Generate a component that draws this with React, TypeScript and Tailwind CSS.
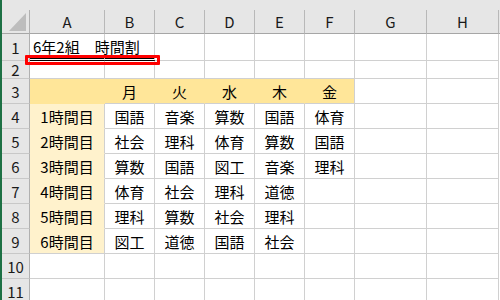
import React from "react";

const COLS = ["A", "B", "C", "D", "E", "F", "G", "H"];

// 時間割 rows 4-9: label + Mon..Fri
const timetable: string[][] = [
  ["1時間目", "国語", "音楽", "算数", "国語", "体育"],
  ["2時間目", "社会", "理科", "体育", "算数", "国語"],
  ["3時間目", "算数", "国語", "図工", "音楽", "理科"],
  ["4時間目", "体育", "社会", "理科", "道徳", ""],
  ["5時間目", "理科", "算数", "社会", "理科", ""],
  ["6時間目", "図工", "道徳", "国語", "社会", ""],
];

const days = ["", "月", "火", "水", "木", "金"];

const ROW_COUNT = 11;

function fillOf(r: number, c: number): string | null {
  if (r === 3 && c >= 0 && c <= 5) return "bg-[#ffe699]";
  if (r >= 4 && r <= 9 && c === 0) return "bg-[#fff2cc]";
  return null;
}

function cellText(r: number, c: number): string {
  if (r === 1 && c === 0) return "6年2組　時間割";
  if (r === 3) return days[c] ?? "";
  if (r >= 4 && r <= 9) return timetable[r - 4][c] ?? "";
  return "";
}

function Cell({ r, c }: { r: number; c: number }) {
  const fill = fillOf(r, c);
  const rightHidden = fill && fillOf(r, c + 1);
  const bottomHidden = fill && fillOf(r + 1, c);
  const doubleBottom = r === 1 && (c === 0 || c === 1);
  const text = cellText(r, c);
  const isTitle = r === 1 && c === 0;

  return (
    <div
      className={`relative flex items-center border-r ${
        rightHidden ? "border-r-transparent" : "border-r-[#d0d0d0]"
      } ${
        doubleBottom
          ? "border-b-[3px] border-double border-b-black"
          : bottomHidden
          ? "border-b border-b-transparent"
          : "border-b border-b-[#d0d0d0]"
      } ${fill ?? ""} ${isTitle ? "z-10 justify-start" : "justify-center"}`}
    >
      {text && (
        <span
          className={`whitespace-nowrap text-[15px] leading-none text-black ${
            isTitle ? "pl-[3px]" : ""
          }`}
        >
          {text}
        </span>
      )}
    </div>
  );
}

export default function App() {
  return (
    <div
      className="relative flex h-[300px] w-[500px] overflow-hidden bg-white"
      style={{ fontFamily: '"Noto Sans CJK JP", "Noto Sans", sans-serif' }}
    >
      {/* workbook frame edge */}
      <div className="w-[2px] shrink-0 bg-[#1e7145]" />

      <div className="flex flex-1 flex-col">
        <div className="h-[10px] shrink-0 bg-[#e6e6e6]" />

        <div className="grid grid-cols-[28px_75px_50px_50px_50px_50px_50px_72px_72px_1fr] grid-rows-[24px_27px_18px_25px_25px_25px_25px_25px_25px_25px_25px_25px]">
          {/* corner */}
          <div className="relative border-r border-b border-r-[#b0b0b0] border-b-[#a6a6a6] bg-[#e6e6e6]">
            <svg width="28" height="24" className="absolute left-0 top-0">
              <polygon points="7,21 24,21 24,3" fill="#bdbdbd" />
            </svg>
          </div>
          {COLS.map((col) => (
            <div
              key={col}
              className="flex items-center justify-center border-r border-b border-r-[#b8b8b8] border-b-[#a6a6a6] bg-[#e6e6e6] text-[15px] leading-none text-[#1a1a1a]"
            >
              {col}
            </div>
          ))}
          <div className="border-b border-b-[#a6a6a6] bg-[#e6e6e6]" />

          {Array.from({ length: ROW_COUNT }, (_, i) => {
            const r = i + 1;
            return (
              <React.Fragment key={r}>
                <div className="flex items-center justify-center border-r border-b border-r-[#b0b0b0] border-b-[#c8c8c8] bg-[#e6e6e6] text-[15px] leading-none text-[#1a1a1a]">
                  {r}
                </div>
                {COLS.map((_, c) => (
                  <Cell key={c} r={r} c={c} />
                ))}
                <div />
              </React.Fragment>
            );
          })}
        </div>
      </div>

      {/* highlight around the double underline */}
      <div className="absolute left-[25px] top-[55px] z-20 h-[10px] w-[135px] rounded-[1px] border-[3px] border-[#ff0000]" />
    </div>
  );
}
